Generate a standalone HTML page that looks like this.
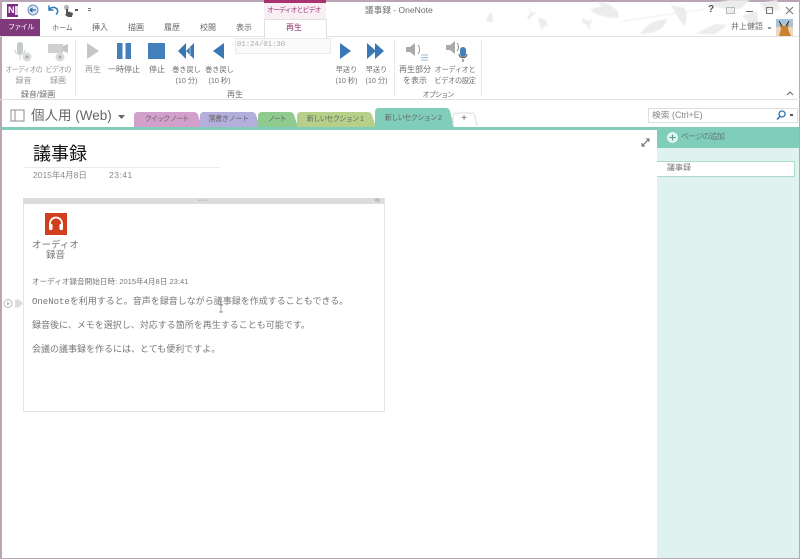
<!DOCTYPE html>
<html lang="ja"><head><meta charset="utf-8"><style>
html,body{margin:0;padding:0;background:#fff}
#p{position:relative;width:800px;height:559px;overflow:hidden;background:#fff;font-family:"Liberation Sans","Noto Sans CJK JP",sans-serif;color:#666}
.t{position:absolute;white-space:nowrap;line-height:1}
.c{position:absolute;text-align:center;white-space:nowrap;font-size:7.200px;line-height:11px;color:#999}
.d{color:#6e6e6e}
.k{font-size:8px;letter-spacing:0}
.b{position:absolute}
svg{position:absolute;overflow:visible}
.tab{position:absolute;font-size:7.200px;text-align:center;color:#666;white-space:nowrap;line-height:1}
.m{font-family:"Liberation Mono","Noto Sans CJK JP",monospace}
</style></head><body><div id="p">
<div class="b" style="left:0;top:0;width:800px;height:1.500px;background:#b9a5b6"></div>
<div class="b" style="left:0;top:0;width:1.500px;height:559px;background:#b9a5b6"></div>
<div class="b" style="left:798.500px;top:0;width:1.500px;height:559px;background:#b9a5b6"></div>
<div class="b" style="left:0;top:557.500px;width:800px;height:1.500px;background:#b9a5b6"></div>

<!-- decorative leaves -->
<svg style="left:480px;top:0;filter:blur(.6px)" width="320" height="36" fill="#ececec">
<path d="M6 20l5-9 2 9 2 1-6 1z"/><path d="M48 4l3 8 6 1-5 3-3 4-2-3 3-3z"/><path d="M58 17l8 3 2 6-4 0-2 5-2-6z"/><path d="M102 18l6 3 5-1-3 4 0 7-3-6-5-3z"/>
<path d="M110 10c12-6 22-4 27 0 2 4 2 6 1 8-10 0-20-2-28-8z"/><path d="M118 2c8 1 14 2 17 8-6 0-13-2-17-8z"/><path d="M160 34c6-9 14-14 27-15-2 9-10 15-27 15z"/><path d="M190 3c4 4 8 3 14 5 4 4 3 15 0 18-4-5-8-12-14-23z"/>
<path d="M225 4l25-4 20 0-10 9-15 0z"/><path d="M215 34l20-10 12 1-12 9z"/><path d="M262 16l15-5 1 12-8 1z"/><path d="M280 3l17-3 3 10-15 1z"/>
<path d="M140 22c25-5 50-7 85-13" stroke="#ececec" fill="none"/></svg>

<!-- QAT -->
<div class="b" style="left:7px;top:4px;width:11px;height:13px;background:#7b2d84"></div>
<div class="t" style="left:8px;top:6px;font-size:9px;font-weight:bold;color:#fff">N</div>
<div class="b" style="left:15px;top:6px;width:3px;height:9px;background:#e7d8e9"></div>
<svg style="left:27px;top:4px" width="12" height="12"><circle cx="6" cy="6" r="5" fill="#d8e6f5" stroke="#6a8fb8"/><path d="M9 6H3.500M5.500 3.800L3.200 6l2.300 2.200" stroke="#2a66ad" fill="none" stroke-width="1.300"/></svg>
<svg style="left:47px;top:4px" width="12" height="12"><path d="M2 1.500V6h4.500M2.500 5.500C4 3 8 2.500 10 5c1.200 2 .7 4-1 5.500" stroke="#2a78b8" stroke-width="1.500" fill="none"/></svg>
<svg style="left:62px;top:4px" width="13" height="14"><circle cx="4.500" cy="3.500" r="2.500" fill="#aab4bd"/><path d="M4 5v5l-1 1 3 2h4l1-4-3-1-2-.5V5z" fill="#555"/></svg>
<div class="t" style="left:75px;top:9px;width:3px;height:2px;background:#555"></div>
<div class="b" style="left:88px;top:8px;width:3px;height:1px;background:#777"></div>
<div class="b" style="left:88px;top:10px;width:3px;height:1px;background:#777"></div>

<div class="t" style="left:365px;top:6px;font-size:8.600px;color:#6e6e6e">議事録 - OneNote</div>

<!-- window buttons -->
<div class="t" style="left:708px;top:5px;font-size:10px;font-weight:bold;color:#555">?</div>
<div class="b" style="left:726px;top:7px;width:7px;height:5px;border:1px solid #bbb;background:#eee"></div>
<div class="b" style="left:746px;top:11px;width:7px;height:1px;background:#666"></div>
<div class="b" style="left:766px;top:7px;width:7px;height:7px;border:1px solid #777;box-sizing:border-box"></div>
<svg style="left:785px;top:6px" width="9" height="9"><path d="M1 1l7 7M8 1L1 8" stroke="#777" stroke-width="1.100"/></svg>
<div class="t" style="left:731px;top:23px;font-size:8px;color:#6e6e6e">井上健語</div>
<div class="b" style="left:768px;top:27px;width:3px;height:1.500px;background:#999"></div>
<svg style="left:776px;top:19px" width="17" height="17"><rect width="17" height="8" fill="#a8c4dc"/><rect y="8" width="17" height="9" fill="#e8d9c0"/><path d="M3 17l2-7-2-6 3 3h4l3-4-1 7 3 7z" fill="#c9822e"/><path d="M3 2l3 5M13 2L10 7" stroke="#333"/></svg>

<!-- contextual tab -->
<div class="b" style="left:264px;top:0;width:62px;height:3px;background:#a8336f"></div>
<div class="b" style="left:264px;top:3px;width:62px;height:16px;background:#f8eef4"></div>
<div class="t" style="left:267px;top:7px;font-size:7px;letter-spacing:-1px;color:#a03a74">オーディオとビデオ</div>
<div class="b" style="left:264px;top:19px;width:61px;height:18px;background:#fff;border:1px solid #e0e0e0;border-bottom:0"></div>
<div class="t" style="left:286px;top:24px;font-size:8px;color:#93316a">再生</div>

<!-- tabs -->
<div class="b" style="left:0;top:19px;width:40px;height:17px;background:#80397b"></div>
<div class="t" style="left:8px;top:24px;font-size:7px;letter-spacing:-.6px;color:#fff">ファイル</div>
<div class="t" style="left:52px;top:24.500px;font-size:7px">ホーム</div>
<div class="t" style="left:92px;top:24px;font-size:8px">挿入</div>
<div class="t" style="left:128px;top:24px;font-size:8px">描画</div>
<div class="t" style="left:164px;top:24px;font-size:8px">履歴</div>
<div class="t" style="left:200px;top:24px;font-size:8px">校閲</div>
<div class="t" style="left:236px;top:24px;font-size:8px">表示</div>
<div class="b" style="left:0;top:36px;width:264px;height:1px;background:#e4e4e4"></div>
<div class="b" style="left:326px;top:36px;width:473px;height:1px;background:#e4e4e4"></div>

<!-- ribbon icons -->
<svg style="left:13px;top:42px" width="20" height="22"><rect x="4" y="0" width="6" height="12" rx="3" fill="#c2cace"/><path d="M2 8c0 6 10 6 10 0M7 13v5" stroke="#ccc" fill="none"/><circle cx="14" cy="15" r="4.500" fill="#dadada"/><circle cx="14" cy="15" r="1.500" fill="#aaa"/></svg>
<svg style="left:48px;top:42px" width="22" height="22"><rect x="0" y="2" width="15" height="9" fill="#cfcfcf"/><path d="M15 4l5-2v9l-5-2z" fill="#c4c4c4"/><circle cx="12" cy="15" r="4.500" fill="#dadada"/><circle cx="12" cy="15" r="1.500" fill="#aaa"/></svg>
<svg style="left:87px;top:43px" width="12" height="16"><path d="M0 0l12 8L0 16z" fill="#c6c6c6"/></svg>
<svg style="left:117px;top:43px" width="15" height="16"><path d="M0 0h5.500v16H0zM8.500 0h5.500v16H8.500z" fill="#437fbb"/></svg>
<svg style="left:148px;top:43px" width="17" height="16"><rect width="17" height="16" fill="#437fbb"/></svg>
<svg style="left:178px;top:43px" width="16" height="16"><path d="M8 0v16L0 8zM16 0v16L8 8z" fill="#3a78b5"/><path d="M12 3v10" stroke="#a8c7e4"/></svg>
<svg style="left:213px;top:43px" width="11" height="16"><path d="M11 0v16L0 8z" fill="#3a78b5"/></svg>
<svg style="left:340px;top:43px" width="11" height="16"><path d="M0 0v16L11 8z" fill="#3a78b5"/></svg>
<svg style="left:367px;top:43px" width="17" height="16"><path d="M0 0v16L9 8zM8 0v16L17 8z" fill="#3a78b5"/></svg>
<svg style="left:405px;top:42px" width="24" height="20"><path d="M1 5h4l5-4v13l-5-4H1z" fill="#aaa"/><path d="M13 3c2 2 2 7 0 9" stroke="#999" fill="none"/><path d="M16 13h7M16 15.500h7M16 18h7" stroke="#9dbad6"/></svg>
<svg style="left:445px;top:41px" width="24" height="22"><path d="M1 4h4l5-4v13l-5-4H1z" fill="#aaa"/><path d="M12 2c2 2 2 6 0 8" stroke="#999" fill="none"/><rect x="15" y="6" width="6" height="10" rx="3" fill="#437fbb"/><path d="M14 13c0 5 8 5 8 0M18 18v3" stroke="#555" fill="none"/></svg>

<!-- ribbon labels -->
<div class="c" style="left:0;top:64px;width:47px;letter-spacing:-1px">オーディオの<br><span class="k">録音</span></div>
<div class="c" style="left:41px;top:64px;width:34px;letter-spacing:-.9px">ビデオの<br><span class="k">録画</span></div>
<div class="c k" style="left:78px;top:64px;width:30px">再生</div>
<div class="c d k" style="left:105px;top:64px;width:38px">一時停止</div>
<div class="c d k" style="left:142px;top:64px;width:30px">停止</div>
<div class="c d" style="left:170px;top:64px;width:33px">巻き戻し<br>(10 分)</div>
<div class="c d" style="left:203px;top:64px;width:33px">巻き戻し<br>(10 秒)</div>
<div class="c d" style="left:330px;top:64px;width:33px">早送り<br>(10 秒)</div>
<div class="c d" style="left:360px;top:64px;width:33px">早送り<br>(10 分)</div>
<div class="c d k" style="left:397px;top:64px;width:36px">再生部分<br>を表示</div>
<div class="c d" style="left:432px;top:64px;width:46px;letter-spacing:-.3px">オーディオと<br>ビデオの設定</div>
<div class="c d k" style="left:15px;top:89px;width:46px">録音/録画</div>
<div class="c d k" style="left:220px;top:89px;width:30px">再生</div>
<div class="c d" style="left:420px;top:89px;width:36px;letter-spacing:-1px">オプション</div>
<div class="b" style="left:235px;top:38px;width:94px;height:14px;border:1px solid #eaeaea;background:#fafafa"></div>
<div class="t m" style="left:237px;top:42px;font-size:7.300px;color:#aaa">01:24/01:30</div>
<div class="b" style="left:75px;top:40px;width:1px;height:56px;background:#e8e8e8"></div>
<div class="b" style="left:394px;top:40px;width:1px;height:56px;background:#e8e8e8"></div>
<div class="b" style="left:481px;top:40px;width:1px;height:56px;background:#e8e8e8"></div>
<svg style="left:786px;top:91px" width="8" height="5"><path d="M1 4l3-3 3 3" stroke="#666" fill="none"/></svg>
<div class="b" style="left:0;top:99px;width:800px;height:1px;background:#e2e2e2"></div>

<!-- notebook bar -->
<svg style="left:10px;top:109px" width="16" height="13"><path d="M1 1h13v11H1zM5 1v11" fill="#fff" stroke="#8d8d8d"/></svg>
<div class="t" style="left:31px;top:109px;font-size:13.500px;color:#666">個人用 (Web)</div>
<svg style="left:118px;top:115px" width="7" height="4"><path d="M0 0h7L3.500 4z" fill="#666"/></svg>

<svg style="left:0;top:0" width="800" height="130">
<path d="M134 127V116Q134 112 138 112H194Q197 112 198 115L202 127Z" fill="#d2a0ca"/>
<path d="M200 127V116Q200 112 204 112H252Q255 112 256 115L260 127Z" fill="#b3aedb"/>
<path d="M258 127V116Q258 112 262 112H290Q293 112 294 115L298 127Z" fill="#8fca8f"/>
<path d="M297 127V116Q297 112 301 112H368Q371 112 372 115L376 127Z" fill="#b6d08a"/>
<path d="M375 127V112Q375 108 379 108H446Q449 108 450 111L454 127Z" fill="#80cdb9"/>
<path d="M453 126V117Q453 113 457 113H472Q474 113 474.500 115L477 126" fill="#fff" stroke="#dcdcdc"/>
</svg>
<div class="tab" style="left:134px;top:114.500px;width:65px;letter-spacing:-1.100px">クイック ノート</div>
<div class="tab" style="left:200px;top:114.500px;width:57px;letter-spacing:-.5px">落書きノート</div>
<div class="tab" style="left:258px;top:114.500px;width:37px;letter-spacing:-1.500px">ノート</div>
<div class="tab" style="left:297px;top:114.500px;width:76px;letter-spacing:-.7px">新しいセクション 1</div>
<div class="tab" style="left:375px;top:113.500px;width:76px;letter-spacing:-.7px">新しいセクション 2</div>
<div class="tab" style="left:453px;top:114px;width:22px;font-size:10px">+</div>
<div class="b" style="left:1px;top:126.500px;width:798px;height:3.500px;background:#80cdb9"></div>

<!-- search -->
<div class="b" style="left:648px;top:108px;width:148px;height:13px;border:1px solid #ddd;background:#fff"></div>
<div class="t" style="left:652px;top:110.500px;font-size:8.800px;color:#888">検索 (Ctrl+E)</div>
<svg style="left:776px;top:110px" width="10" height="10"><circle cx="6" cy="4" r="3" fill="none" stroke="#2f74b5" stroke-width="1.300"/><path d="M4 6.500L1 9.500" stroke="#2f74b5" stroke-width="1.500"/></svg>
<div class="b" style="left:790px;top:114px;width:3px;height:2px;background:#555"></div>

<!-- page list -->
<div class="b" style="left:657px;top:130px;width:142px;height:427.500px;background:#e0f2ee"></div>
<div class="b" style="left:657px;top:127px;width:142px;height:20.500px;background:#80cdb9"></div>
<svg style="left:667px;top:132px" width="11" height="11"><circle cx="5.500" cy="5.500" r="4.800" fill="#d8f0e8" stroke="#fff"/><path d="M5.500 2.500v6M2.500 5.500h6" stroke="#5a9a8c"/></svg>
<div class="t" style="left:681px;top:133px;font-size:8px;letter-spacing:-.8px;color:#5b7f77">ページの追加</div>
<div class="b" style="left:657px;top:161px;width:137px;height:14px;background:#fff;border:1px solid #a9dccf;border-left:0"></div>
<div class="t" style="left:667px;top:164px;font-size:8px;color:#777">議事録</div>

<svg style="left:641px;top:138px" width="9" height="9"><path d="M1 8L8 1M5 1h3v3M1 5v3h3" stroke="#666" fill="none"/></svg>

<!-- page title -->
<div class="t" style="left:33px;top:145px;font-size:18px;color:#111">議事録</div>
<div class="b" style="left:24px;top:167px;width:196px;height:1px;background:#eaeaea"></div>
<div class="t" style="left:33px;top:171px;font-size:8.500px;color:#888">2015年4月8日</div>
<div class="t" style="left:109px;top:171px;font-size:8.500px;letter-spacing:.5px;color:#888">23:41</div>

<!-- note container -->
<div class="b" style="left:23px;top:198px;width:360px;height:213px;border:1px solid #e4e4e4;border-top:0"></div>
<div class="b" style="left:23px;top:198px;width:361px;height:6px;background:#dcdcdc"></div>
<div class="t" style="left:198px;top:197px;font-size:7px;color:#666">····</div>
<div class="t" style="left:375px;top:197px;font-size:7px;color:#666">‹›</div>

<svg style="left:45px;top:213px" width="22" height="22"><rect width="22" height="22" fill="#d0401f"/><path d="M5 13V10.500a6 6 0 0 1 12 0V13" fill="none" stroke="#fff" stroke-width="1.800"/><rect x="4" y="11" width="3.500" height="6" rx="1" fill="#fff"/><rect x="14.500" y="11" width="3.500" height="6" rx="1" fill="#fff"/></svg>
<div class="t m" style="left:32px;top:241px;font-size:9.500px;color:#777">オーディオ</div>
<div class="t m" style="left:46px;top:251px;font-size:9.500px;color:#777">録音</div>
<div class="t" style="left:32px;top:278px;font-size:7.600px;color:#777">オーディオ録音開始日時: 2015年4月8日 23:41</div>
<div class="t m" style="left:32px;top:298px;font-size:9px;color:#777">OneNoteを利用すると。音声を録音しながら議事録を作成することもできる。</div>
<div class="t m" style="left:32px;top:322px;font-size:9px;color:#777">録音後に、メモを選択し、対応する箇所を再生することも可能です。</div>
<div class="t m" style="left:32px;top:346px;font-size:9px;color:#777">会議の議事録を作るには、とても便利ですよ。</div>
<svg style="left:218px;top:304px" width="6" height="9"><path d="M1 1h4M3 1v7M1 8h4" stroke="#777" stroke-width=".7" fill="none"/></svg>

<svg style="left:3px;top:298px" width="19" height="11"><circle cx="5" cy="5.500" r="4" fill="#fff" stroke="#bbb"/><path d="M4 3.500l3 2-3 2z" fill="#bbb"/><path d="M12 1.500h4l4 4-4 4h-4z" fill="#ddd"/></svg>
</div></body></html>
